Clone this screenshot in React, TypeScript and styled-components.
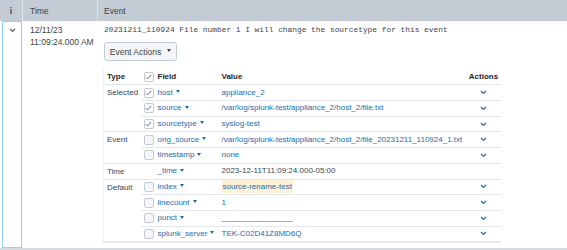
import React from "react";
import styled, { createGlobalStyle } from "styled-components";

const GlobalStyle = createGlobalStyle`
  body {
    margin: 0;
    background: #fff;
    font-family: "Liberation Sans", Arial, sans-serif;
    color: #3c444d;
  }
`;

const Page = styled.div`
  width: 567px;
  height: 250px;
  overflow: hidden;
`;

const Header = styled.div`
  display: grid;
  grid-template-columns: 22px 75px 1fr;
  height: 21px;
  background: #c3cbd4;
  font-size: 8.5px;
  color: #3c444d;
`;

const HeadCell = styled.div<{ $pad: number; $center?: boolean }>`
  display: flex;
  align-items: center;
  justify-content: ${(p) => (p.$center ? "center" : "flex-start")};
  padding-left: ${(p) => p.$pad}px;
  border-left: ${(p) => (p.$center ? "none" : "1px solid #dde2e7")};
  font-weight: ${(p) => (p.$center ? 700 : 400)};
`;

const EventRow = styled.div`
  display: grid;
  grid-template-columns: 22px 75px 1fr;
  height: 227px;
  border-bottom: 2px solid #d5dae0;
`;

const ExpandCell = styled.div`
  padding-left: 2px;
`;

const ExpandBox = styled.div`
  box-sizing: border-box;
  width: 20px;
  height: 100%;
  border: 1.5px solid #8ed3f5;
  display: flex;
  justify-content: center;
  padding-top: 6px;
`;

const TimeCell = styled.div`
  padding: 3px 0 0 8px;
  font-size: 8.5px;
  line-height: 12px;
`;

const EventCell = styled.div`
  padding: 3px 0 0 7px;
`;

const Raw = styled.div`
  font-family: "Liberation Mono", "Courier New", monospace;
  font-size: 7.85px;
  line-height: 12px;
  white-space: pre;
`;

const ActionsButton = styled.div`
  display: inline-flex;
  align-items: center;
  gap: 3px;
  box-sizing: border-box;
  margin-top: 6px;
  height: 19px;
  width: 73px;
  justify-content: center;
  border: 1px solid #c3cbd4;
  border-radius: 3px;
  background: #f4f5f7;
  font-size: 8.5px;
  color: #3c444d;
`;

const Caret = styled.span`
  display: inline-block;
  width: 0;
  height: 0;
  border-left: 2.5px solid transparent;
  border-right: 2.5px solid transparent;
  border-top: 3px solid currentColor;
  margin-left: 3px;
  vertical-align: middle;
  position: relative;
  top: -1px;
`;

const FieldTable = styled.table`
  margin: 8px 0 0 -1px;
  width: 397px;
  table-layout: fixed;
  border-collapse: collapse;
  border-left: 1px solid #eef0f3;
  border-bottom: 2px solid #e4e8ec;
  font-size: 8px;
`;

const Row = styled.tr`
  height: 15.73px;
`;

const Th = styled.th<{ $align?: string }>`
  padding: 0 ${(p) => (p.$align === "center" ? 0 : 3)}px;
  text-align: ${(p) => p.$align || "left"};
  font-weight: 700;
  color: #1f2327;
  line-height: 10px;
  border-bottom: 1px solid #e4e8ec;
  vertical-align: middle;
  white-space: nowrap;
`;

const Td = styled.td<{ $align?: string; $top?: boolean }>`
  padding: ${(p) => (p.$top ? "3px" : "0")} ${(p) => (p.$align === "center" ? 0 : 3)}px 0;
  text-align: ${(p) => p.$align || "left"};
  vertical-align: ${(p) => (p.$top ? "top" : "middle")};
  line-height: 10px;
  border-bottom: 1px solid #e4e8ec;
  white-space: nowrap;
  overflow: hidden;
`;

const Link = styled.span`
  color: #1e6cab;
`;

const Plain = styled.span`
  color: #3c444d;
`;

const Highlight = styled.span`
  color: #1e6cab;
  background: #fdf1d6;
  padding: 2px 1px;
`;

const Box = styled.span<{ $checked?: boolean }>`
  display: flex;
  align-items: center;
  justify-content: center;
  box-sizing: border-box;
  width: 10px;
  height: 10px;
  border: 1px solid #c3cbd4;
  border-radius: 2px;
  background: ${(p) => (p.$checked ? "#fff" : "#f5f6f8")};
`;

const Check = ({ checked }: { checked?: boolean }) => (
  <Box $checked={checked}>
    {checked && (
      <svg width="7" height="6" viewBox="0 0 7 6">
        <polyline points="0.8,3.2 2.6,5 6.2,0.8" fill="none" stroke="#5c6773" strokeWidth="0.9" />
      </svg>
    )}
  </Box>
);

const ChevronIcon = styled.svg`
  display: block;
  margin: 0 auto;
`;

const Chevron = ({ color }: { color: string }) => (
  <ChevronIcon width="7" height="5" viewBox="0 0 7 5">
    <polyline points="1,1 3.5,3.5 6,1" fill="none" stroke={color} strokeWidth="1.2" />
  </ChevronIcon>
);

type Field = {
  name: string;
  value: string;
  checked?: boolean;
  noBox?: boolean;
  noAction?: boolean;
  plain?: boolean;
  highlight?: boolean;
};

type Group = { type: string; fields: Field[] };

const groups: Group[] = [
  {
    type: "Selected",
    fields: [
      { name: "host", value: "appliance_2", checked: true },
      { name: "source", value: "/var/log/splunk-test/appliance_2/host_2/file.txt", checked: true },
      { name: "sourcetype", value: "syslog-test", checked: true },
    ],
  },
  {
    type: "Event",
    fields: [
      { name: "orig_source", value: "/var/log/splunk-test/appliance_2/host_2/file_20231211_110924_1.txt" },
      { name: "timestamp", value: "none" },
    ],
  },
  {
    type: "Time",
    fields: [{ name: "_time", value: "2023-12-11T11:09:24.000-05:00", noBox: true, noAction: true, plain: true }],
  },
  {
    type: "Default",
    fields: [
      { name: "index", value: "source-rename-test", highlight: true },
      { name: "linecount", value: "1" },
      { name: "punct", value: "________________" },
      { name: "splunk_server", value: "TEK-C02D41Z8MD6Q" },
    ],
  },
];

const renderValue = (f: Field) => {
  if (f.plain) return <Plain>{f.value}</Plain>;
  if (f.highlight) return <Highlight>{f.value}</Highlight>;
  return <Link>{f.value}</Link>;
};

export default function App() {
  return (
    <Page>
      <GlobalStyle />
      <Header>
        <HeadCell $pad={0} $center>
          i
        </HeadCell>
        <HeadCell $pad={7}>Time</HeadCell>
        <HeadCell $pad={6}>Event</HeadCell>
      </Header>
      <EventRow>
        <ExpandCell>
          <ExpandBox>
            <Chevron color="#5c6773" />
          </ExpandBox>
        </ExpandCell>
        <TimeCell>
          12/11/23
          <br />
          11:09:24.000 AM
        </TimeCell>
        <EventCell>
          <Raw>20231211_110924 File number 1 I will change the sourcetype for this event</Raw>
          <ActionsButton>
            Event Actions
            <Caret />
          </ActionsButton>
          <FieldTable>
            <colgroup>
              <col style={{ width: 37 }} />
              <col style={{ width: 14 }} />
              <col style={{ width: 64 }} />
              <col style={{ width: 248 }} />
              <col style={{ width: 34 }} />
            </colgroup>
            <thead>
              <Row>
                <Th>Type</Th>
                <Th>
                  <Check checked />
                </Th>
                <Th>Field</Th>
                <Th>Value</Th>
                <Th $align="center">Actions</Th>
              </Row>
            </thead>
            <tbody>
              {groups.map((g) =>
                g.fields.map((f, i) => (
                  <Row key={f.name}>
                    {i === 0 && (
                      <Td rowSpan={g.fields.length} $top>
                        <Plain>{g.type}</Plain>
                      </Td>
                    )}
                    <Td>{!f.noBox && <Check checked={f.checked} />}</Td>
                    <Td>
                      <Link>
                        {f.name}
                        <Caret />
                      </Link>
                    </Td>
                    <Td>{renderValue(f)}</Td>
                    <Td $align="center">{!f.noAction && <Chevron color="#1e6cab" />}</Td>
                  </Row>
                ))
              )}
            </tbody>
          </FieldTable>
        </EventCell>
      </EventRow>
    </Page>
  );
}
